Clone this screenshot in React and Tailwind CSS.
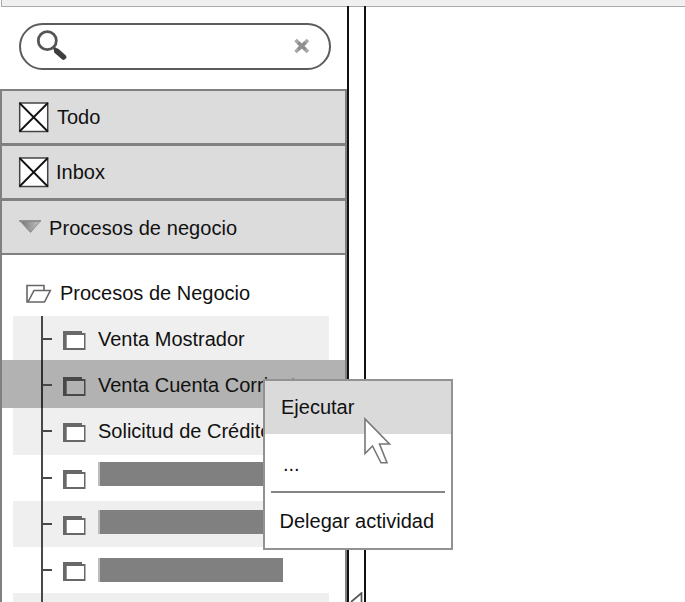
function Placeholder() {
  return (
    <svg className="block shrink-0" width="31" height="31" viewBox="0 0 31 31">
      <rect x="1.7" y="1" width="28" height="28.5" fill="#fff" stroke="#444" strokeWidth="1.5" />
      <path d="M1.5 1L29.8 29.5M29.8 1L1.5 29.5" stroke="#111" strokeWidth="1.8" />
    </svg>
  );
}

function SearchBox() {
  return (
    <div className="ml-[19px] mt-[17px] flex h-[47px] w-[312px] shrink-0 items-start justify-between rounded-full border-2 border-[#5c5c5c] bg-white pl-[15px] pr-[19px]">
      <svg className="mt-[5px] block" width="34" height="34" viewBox="0 0 34 34">
        <circle cx="11.3" cy="10.7" r="9" fill="none" stroke="#555" strokeWidth="2.8" />
        <path d="M18 18L21 21" stroke="#444" strokeWidth="3" />
        <path d="M20.8 21.2L27.5 27" stroke="#3e3e3e" strokeWidth="5.6" strokeLinecap="round" />
      </svg>
      <svg className="mt-[13px] block" width="16" height="16" viewBox="0 0 16 16">
        <path d="M1.5 2L14 14M14 2L1.5 14" stroke="#a8a8a8" strokeWidth="3.6" />
        <path d="M4 4.5L11.5 11.5M11.5 4.5L4 11.5" stroke="#8f8f8f" strokeWidth="3.6" />
      </svg>
    </div>
  );
}

function FolderItem({ active }) {
  return (
    <svg className="block shrink-0" width="23" height="20" viewBox="0 0 23 20">
      <path d="M0 0H19V2H22.5V19H0Z" fill={active ? "#484848" : "#686868"} />
      <path d="M3.7 4H21V17H3.7Z" fill={active ? "#b2b2b2" : "#fff"} />
    </svg>
  );
}

const items = [
  { label: "Venta Mostrador", striped: true, height: "h-[44.2px]" },
  { label: "Venta Cuenta Corriente", active: true, height: "h-[48.2px] pt-[2px]" },
  { label: "Solicitud de Crédito", striped: true, height: "h-[46.2px]" },
  { bar: "mt-[7px]", height: "h-[46.2px]" },
  { bar: "mt-[9px]", striped: true, height: "h-[46.2px]" },
  { bar: "mt-[11px]", height: "h-[46.2px]" },
  { striped: true, empty: true, height: "h-[46.2px]" },
];

function TreeRow({ item }) {
  return (
    <div
      className={
        "flex shrink-0 " +
        item.height +
        (item.active ? " bg-[#b2b2b2]" : item.striped ? " ml-[11px] mr-[16px] bg-[#efefef]" : "")
      }
    >
      <div
        className={
          "w-[2px] shrink-0 " +
          (item.active
            ? "-mt-[2px] ml-[39px] bg-[#303030]"
            : item.striped
              ? "ml-[28px] bg-[#484848]"
              : "ml-[39px] bg-[#484848]")
        }
      />
      {!item.empty && (
        <>
          <div className="mt-[22px] h-[2px] w-[9px] shrink-0 bg-[#484848]" />
          <div className="ml-[11px] mt-[15px] shrink-0">
            <FolderItem active={item.active} />
          </div>
          {item.label ? (
            <span className="ml-[12px] whitespace-nowrap leading-[46px]">{item.label}</span>
          ) : (
            <div className={"ml-[12px] h-[24px] w-[185px] shrink-0 border-l-2 border-[#bdbdbd] bg-[#808080] " + item.bar} />
          )}
        </>
      )}
    </div>
  );
}

export default function App() {
  return (
    <div className="relative flex h-[602px] w-[685px] flex-col overflow-hidden bg-white font-['Liberation_Sans',Arial,sans-serif] text-[20px] leading-[24px] text-[#111]">
      <div className="ml-px h-[7px] shrink-0 border-b border-l border-[#aaa] bg-[#f0f0f0]" />
      <div className="-mt-px flex min-h-0 flex-1">
        <aside className="flex w-[347px] shrink-0 flex-col">
          <SearchBox />
          <div className="mt-[19px] flex min-h-0 flex-1 flex-col overflow-hidden border-x-2 border-t-2 border-[#808080]">
            <div className="flex h-[55px] shrink-0 items-start border-b-[3px] border-[#808080] bg-[#dcdcdc] pl-[16px]">
              <div className="mt-[11px]"><Placeholder /></div>
              <span className="ml-[8px] mt-[14px]">Todo</span>
            </div>
            <div className="flex h-[55px] shrink-0 items-start border-b-[3px] border-[#808080] bg-[#dcdcdc] pl-[16px]">
              <div className="mt-[11px]"><Placeholder /></div>
              <span className="ml-[7px] mt-[14px]">Inbox</span>
            </div>
            <div className="flex h-[54px] shrink-0 items-start border-b-2 border-[#808080] bg-[#dcdcdc] pl-[17px]">
              <svg className="mt-[19px] block" width="23" height="14" viewBox="0 0 23 14">
                <defs>
                  <linearGradient id="arrow" x1="0" x2="1" y1="0" y2="0">
                    <stop offset="0" stopColor="#747474" />
                    <stop offset="1" stopColor="#c4c4c4" />
                  </linearGradient>
                </defs>
                <path d="M1 1H21.5L11.5 12.5Z" fill="url(#arrow)" stroke="#929292" />
                <path d="M0 1H22" stroke="#888" strokeWidth="1.5" />
              </svg>
              <span className="ml-[7px] mt-[15px] tracking-[0.08px]">Procesos de negocio</span>
            </div>
            <div className="flex h-[61px] shrink-0 items-start pl-[24px]">
              <svg className="mt-[29px] block" width="26" height="20" viewBox="0 0 26 20" fill="none" stroke="#666" strokeWidth="1.6">
                <path d="M18 6.5V1.5H1V18H18.5L24.3 6.5H8L2 18" />
              </svg>
              <span className="ml-[8px] mt-[26px]">Procesos de Negocio</span>
            </div>
            <div className="flex flex-col">
              {items.map((item, i) => (
                <TreeRow key={i} item={item} />
              ))}
            </div>
          </div>
        </aside>
        <div className="flex w-[19px] shrink-0 flex-col justify-end border-x-2 border-[#111]">
          <svg className="block" width="15" height="10" viewBox="0 0 15 10">
            <path d="M2 10L12.5 1V10" fill="none" stroke="#555" strokeWidth="1.7" />
          </svg>
        </div>
        <main className="flex-1" />
      </div>

      <div className="absolute left-[263px] top-[379px] flex h-[171px] w-[190px] flex-col border-2 border-[#929292] bg-white">
        <div className="h-[53px] shrink-0 bg-[#dadada] pl-[16px] pt-[14px]">Ejecutar</div>
        <div className="h-[57px] shrink-0 pl-[18px] pt-[18px]">...</div>
        <div className="mx-[6px] h-[2px] shrink-0 bg-[#858585]" />
        <div className="whitespace-nowrap pl-[14.5px] pt-[16px]">Delegar actividad</div>
      </div>
      <svg className="absolute left-[363px] top-[416px]" width="30" height="50" viewBox="0 0 30 50">
        <path d="M2 3V37.5L9.5 30L18 46.8H24L16.5 28H26.5Z" fill="#fff" stroke="#777" strokeWidth="1.6" />
      </svg>
    </div>
  );
}
